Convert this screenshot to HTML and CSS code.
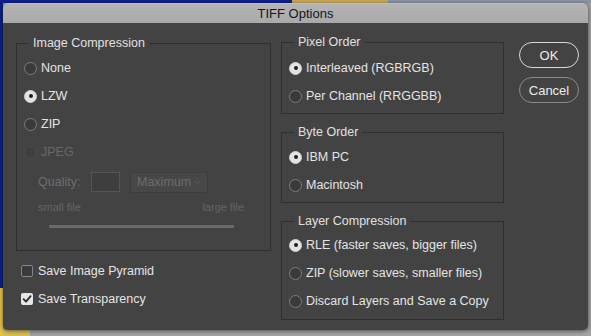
FILE: index.html
```html
<!DOCTYPE html>
<html>
<head>
<meta charset="utf-8">
<title>TIFF Options</title>
<link rel="stylesheet" href="styles.css">
</head>
<body>
<div class="window">
  <div class="titlebar">TIFF Options</div>
  <div class="content">
    <div class="col-left">
      <div class="group group-compress">
        <div class="group-title">Image Compression</div>
        <div class="row"><span class="radio"></span><span>None</span></div>
        <div class="row"><span class="radio on"></span><span>LZW</span></div>
        <div class="row"><span class="radio"></span><span>ZIP</span></div>
        <div class="row disabled"><span class="radio"></span><span>JPEG</span></div>
        <div class="jpeg-opts">
          <div class="quality">
            <span class="q-label">Quality:</span>
            <span class="q-input"></span>
            <span class="q-select"><span>Maximum</span><svg class="chev" width="7" height="5" viewBox="0 0 7 5"><path d="M0.8 1 L3.5 3.8 L6.2 1" fill="none" stroke="#5e5e5e" stroke-width="1"/></svg></span>
          </div>
          <div class="size-labels"><span>small file</span><span>large file</span></div>
          <div class="slider"></div>
        </div>
      </div>
      <div class="checks">
        <div class="row"><span class="check"></span><span>Save Image Pyramid</span></div>
        <div class="row"><span class="check on"><svg width="12" height="12" viewBox="0 0 12 12"><path d="M2.6 6.2 L5 8.6 L9.6 3.2" fill="none" stroke="#2a2a2a" stroke-width="1.8" stroke-linecap="round" stroke-linejoin="round"/></svg></span><span>Save Transparency</span></div>
      </div>
    </div>
    <div class="col-right">
      <div class="group group-pixel">
        <div class="group-title">Pixel Order</div>
        <div class="row"><span class="radio on"></span><span>Interleaved (RGBRGB)</span></div>
        <div class="row"><span class="radio"></span><span>Per Channel (RRGGBB)</span></div>
      </div>
      <div class="group group-byte">
        <div class="group-title">Byte Order</div>
        <div class="row"><span class="radio on"></span><span>IBM PC</span></div>
        <div class="row"><span class="radio"></span><span>Macintosh</span></div>
      </div>
      <div class="group group-layer">
        <div class="group-title">Layer Compression</div>
        <div class="row"><span class="radio on"></span><span>RLE (faster saves, bigger files)</span></div>
        <div class="row"><span class="radio"></span><span>ZIP (slower saves, smaller files)</span></div>
        <div class="row"><span class="radio"></span><span>Discard Layers and Save a Copy</span></div>
      </div>
    </div>
    <div class="col-buttons">
      <div class="btn btn-default">OK</div>
      <div class="btn">Cancel</div>
    </div>
  </div>
</div>
</body>
</html>
```

FILE: styles.css
```css
html, body {
  margin: 0;
  padding: 0;
}
body {
  width: 591px;
  height: 336px;
  overflow: hidden;
  font-family: "Liberation Sans", Arial, sans-serif;
  background:
    linear-gradient(to right, #0f2188 0, #0f2188 292px, #c9a95c 292px, #c9a95c 388px, #8d93a6 388px) top left / 100% 3px no-repeat,
    linear-gradient(to bottom, #0f2188 0, #0f2188 288px, #e3c24a 288px) top left / 3px 100% no-repeat,
    linear-gradient(to right, #d8bf55 0, #d8bf55 30px, #a3a3a3 30px) bottom left / 100% 6px no-repeat,
    #a0a0a0;
}
.window {
  margin: 3px 0 0 3px;
  width: 585px;
  height: 327px;
  border-radius: 5px;
  overflow: hidden;
  background: #434343;
  box-shadow: 0 1px 4px rgba(0, 0, 0, 0.55);
}
.titlebar {
  height: 20px;
  line-height: 21px;
  text-align: center;
  font-size: 13px;
  color: #161616;
  background: linear-gradient(to bottom, #c6c6c6 0, #b4b4b4 1px, #a9a9a9 100%);
  border-bottom: 0;
}
.content {
  display: flex;
  align-items: flex-start;
  padding: 19px 0 0 13px;
  font-size: 12.5px;
  color: #e4e4e4;
}
.col-left {
  width: 255px;
  margin-top: 1px;
}
.col-right {
  width: 223px;
  margin-left: 10px;
  display: flex;
  flex-direction: column;
  gap: 18px;
}
.col-buttons {
  width: 60px;
  margin-left: 15px;
  display: flex;
  flex-direction: column;
  gap: 9px;
}
.group {
  position: relative;
  border: 1px solid #2f2f2f;
  padding: 10px 0 3px 7px;
}
.group-compress {
  padding-bottom: 22px;
}
.group-pixel {
  padding-top: 11px;
}
.group-layer {
  padding-top: 9px;
  padding-bottom: 4px;
}
.group-title {
  position: absolute;
  top: -8px;
  left: 12px;
  padding: 0 4px;
  line-height: 15px;
  background: #434343;
  color: #e0e0e0;
}
.row {
  display: flex;
  align-items: center;
  height: 28px;
  gap: 4px;
  white-space: nowrap;
}
.radio {
  position: relative;
  box-sizing: border-box;
  width: 13px;
  height: 13px;
  border-radius: 50%;
  border: 1px solid #7c7c7c;
  background: #3a3a3a;
  flex: none;
}
.radio.on {
  background: #e4e4e4;
  border-color: #d0d0d0;
}
.radio.on::after {
  content: "";
  position: absolute;
  left: 3.5px;
  top: 3.5px;
  width: 4px;
  height: 4px;
  border-radius: 50%;
  background: #1e1e1e;
}
.disabled {
  color: #686868;
}
.disabled .radio {
  border-color: #4e4e4e;
  background: #3f3f3f;
}
.jpeg-opts {
  margin-left: 14px;
  width: 206px;
  color: #6e6e6e;
}
.quality {
  display: flex;
  align-items: center;
  height: 20px;
  margin-top: 6px;
}
.q-label {
  width: 53px;
}
.q-input {
  box-sizing: border-box;
  width: 29px;
  height: 20px;
  border: 1px solid #545454;
  background: #3e3e3e;
}
.q-select {
  box-sizing: border-box;
  display: flex;
  align-items: center;
  justify-content: space-between;
  margin-left: 10px;
  width: 78px;
  height: 21px;
  padding: 0 6px 0 6px;
  border: 1px solid #3d3d3d;
  border-radius: 2px;
  background: #474747;
  color: #6c6c6c;
}
.chev {
  margin-top: 1px;
}
.size-labels {
  display: flex;
  justify-content: space-between;
  margin-top: 8px;
  height: 14px;
  line-height: 14px;
  font-size: 11px;
  color: #646464;
}
.slider {
  margin: 11px 10px 0 11px;
  height: 3px;
  background: #6a6a6a;
  border-radius: 1px;
}
.checks {
  margin-top: 6px;
  padding-left: 5px;
}
.checks .row {
  gap: 5px;
}
.check {
  box-sizing: border-box;
  width: 12px;
  height: 12px;
  border: 1px solid #858585;
  border-radius: 2px;
  background: #3a3a3a;
  flex: none;
  display: flex;
}
.check.on {
  background: #e6e6e6;
  border: 0;
}
.btn {
  box-sizing: border-box;
  height: 26px;
  border: 1px solid #8a8a8a;
  border-radius: 13px;
  display: flex;
  align-items: center;
  justify-content: center;
  font-size: 13px;
  color: #ececec;
}
.btn-default {
  border-color: #dadada;
}
```
